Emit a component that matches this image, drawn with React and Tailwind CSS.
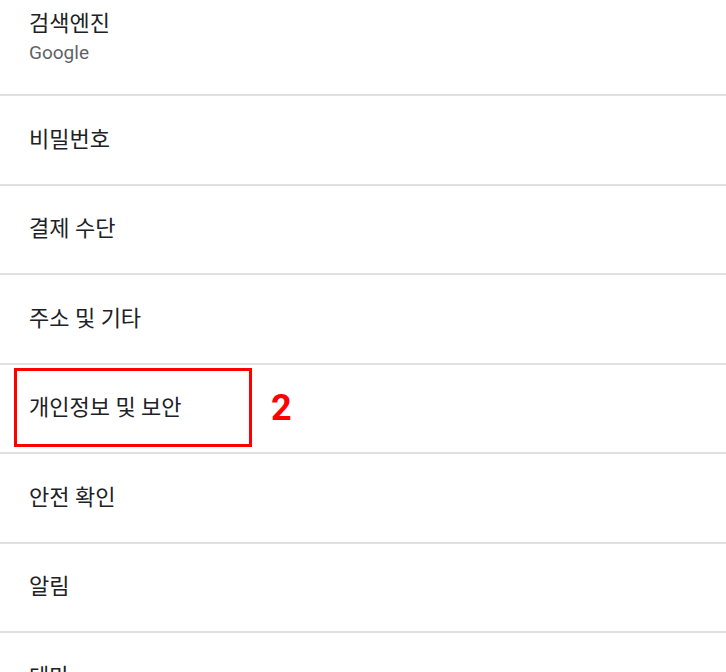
import React from "react";

const font = { fontFamily: "Roboto, 'Noto Sans CJK KR', sans-serif" };

function Row({ label, children }) {
  return (
    <div className="relative h-[89.5px] shrink-0 border-b-2 border-[#e0e0e0] flex items-center pl-[29px]">
      <span className="text-[22px] leading-[28px] text-[#202124]">{label}</span>
      {children}
    </div>
  );
}

export default function App() {
  const items = ["비밀번호", "결제 수단", "주소 및 기타", "개인정보 및 보안", "안전 확인", "알림", "테마"];
  return (
    <div className="w-[726px] h-[672px] overflow-hidden bg-white flex flex-col" style={font}>
      <div className="h-[96px] shrink-0 border-b-2 border-[#e0e0e0] pl-[29px] pt-[10px] flex flex-col">
        <span className="text-[22px] leading-[28px] text-[#202124]">검색엔진</span>
        <span className="mt-[3px] text-[19px] leading-[24px] text-[#5f6368]">Google</span>
      </div>
      {items.map((t) => (
        <Row key={t} label={t}>
          {t === "개인정보 및 보안" && (
            <>
              <div className="absolute left-[14px] top-[3px] w-[238px] h-[79px] border-[3px] border-[#ff0000]" />
              <span className="absolute left-[271px] top-[23px] text-[36px] leading-[40px] font-bold text-[#ff0000]" style={{ fontFamily: "Roboto, sans-serif" }}>
                2
              </span>
            </>
          )}
        </Row>
      ))}
    </div>
  );
}
